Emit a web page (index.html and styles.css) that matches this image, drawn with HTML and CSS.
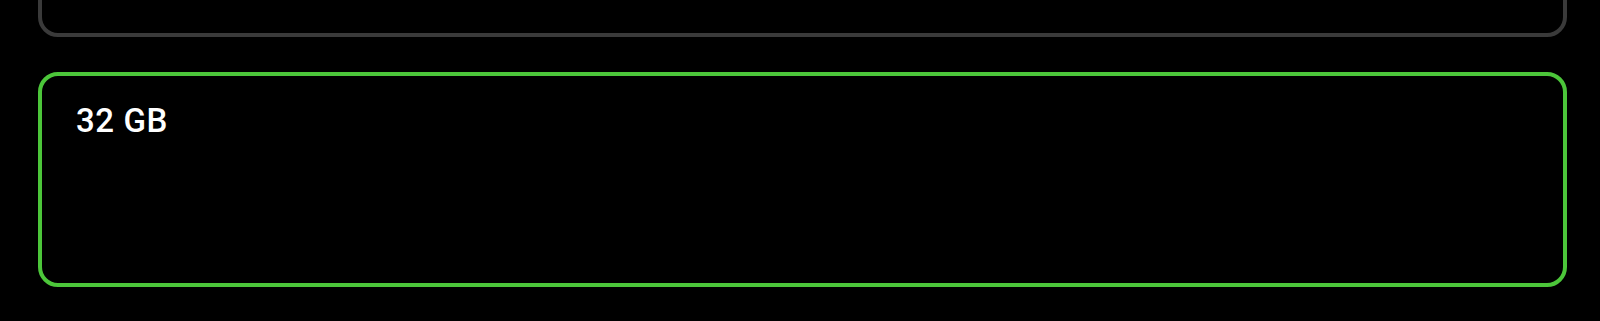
FILE: index.html
```html
<!DOCTYPE html>
<html lang="en">
<head>
    <meta charset="UTF-8">
    <meta name="viewport" content="width=device-width, initial-scale=1.0">
    <title>Storage</title>
    <link rel="stylesheet" href="styles.css">
</head>
<body>
    <div class="option-list">
        <div class="option-card option-prev"></div>
        <div class="option-card option-selected">
            <span class="option-label">32 GB</span>
        </div>
    </div>
</body>
</html>
```

FILE: styles.css
```css
* {
    margin: 0;
    padding: 0;
    box-sizing: border-box;
}

html, body {
    background-color: #000;
    height: 100%;
    overflow: hidden;
}

body {
    font-family: Roboto, 'Noto Sans', sans-serif;
    color: #fff;
}

.option-list {
    display: flex;
    flex-direction: column;
    gap: 35px;
    padding: 0 33px 0 38px;
}

.option-card {
    border: 4px solid #3a3a3a;
    border-radius: 20px;
}

.option-prev {
    height: 100px;
    margin-top: -63px;
}

.option-selected {
    height: 215px;
    border-color: #4cc63a;
    padding: 25px 34px;
}

.option-label {
    font-size: 33px;
    font-weight: 500;
    letter-spacing: 0.6px;
}
```
